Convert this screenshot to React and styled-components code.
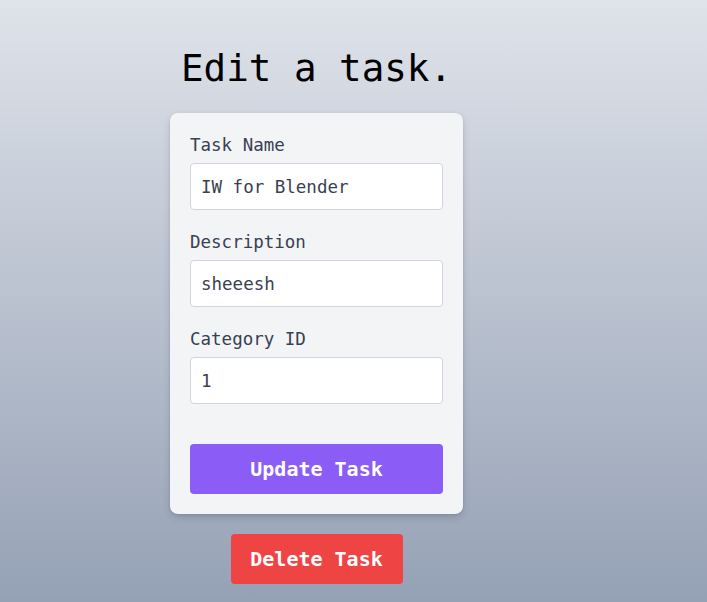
import React from 'react'
import styled, { createGlobalStyle } from 'styled-components'

const GlobalStyle = createGlobalStyle`
    html, body {
        margin: 0;
        padding: 0;
    }
    body {
        font-family: "DejaVu Sans Mono", "Liberation Mono", monospace;
        background: linear-gradient(to bottom, #dfe3ea, #95a1b5);
        min-height: 602px;
    }
`

const Page = styled.div`
    display: flex;
    flex-direction: column;
    align-items: center;
    width: 633px;
    min-height: 602px;
    box-sizing: border-box;
    padding-top: 48px;
`

const Title = styled.h1`
    margin: 0 0 25px 0;
    font-size: 37.5px;
    line-height: 40px;
    font-weight: 400;
    color: #000;
`

const Card = styled.form`
    display: flex;
    flex-direction: column;
    width: 293px;
    box-sizing: border-box;
    padding: 20px;
    background: #f3f4f6;
    border-radius: 8px;
    box-shadow: 0 4px 8px rgba(0, 0, 0, 0.12), 0 1px 3px rgba(0, 0, 0, 0.1);
`

const Field = styled.div`
    display: flex;
    flex-direction: column;
    margin-bottom: ${p => (p.last ? '40px' : '20px')};
`

const Label = styled.label`
    font-size: 17.5px;
    line-height: 24px;
    color: #374151;
    margin-bottom: 6px;
`

const Input = styled.input`
    height: 47px;
    box-sizing: border-box;
    border: 1px solid #d1d5db;
    border-radius: 4px;
    background: #fff;
    padding: 0 10px;
    font-family: inherit;
    font-size: 17.5px;
    color: #374151;
    outline: none;
`

const Button = styled.button`
    height: 50px;
    border: none;
    border-radius: 4px;
    background: ${p => p.bg};
    color: #fff;
    font-family: inherit;
    font-size: 20px;
    font-weight: 700;
    cursor: pointer;
    width: ${p => p.width || '100%'};
`

const DeleteWrap = styled.div`
    margin-top: 20px;
`

const App = () => {
    return (
        <>
            <GlobalStyle />
            <Page>
                <Title>Edit a task.</Title>
                <Card onSubmit={e => e.preventDefault()}>
                    <Field>
                        <Label>Task Name</Label>
                        <Input defaultValue="IW for Blender" />
                    </Field>
                    <Field>
                        <Label>Description</Label>
                        <Input defaultValue="sheeesh" />
                    </Field>
                    <Field last>
                        <Label>Category ID</Label>
                        <Input defaultValue="1" />
                    </Field>
                    <Button bg="#8b5cf6">Update Task</Button>
                </Card>
                <DeleteWrap>
                    <Button bg="#ef4444" width="172px">Delete Task</Button>
                </DeleteWrap>
            </Page>
        </>
    )
}

export default App
